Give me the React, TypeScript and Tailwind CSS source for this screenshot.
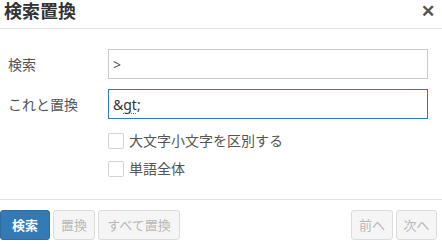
import React from 'react'

const FONT = "font-['Noto_Sans','Noto_Sans_CJK_JP',sans-serif]"

function Check({ label }: { label: string }) {
  return (
    <div className="flex items-center h-[16px] pl-[108px]">
      <span className="w-[16px] h-[16px] border border-[#d4d4d4] rounded-[2px] bg-white" />
      <span className="ml-[5px] text-[14px] leading-none text-[#555]">{label}</span>
    </div>
  )
}

function Btn({ children, w, primary }: { children: React.ReactNode; w: string; primary?: boolean }) {
  return primary ? (
    <button className={`${w} h-[30px] rounded-[3px] bg-[#337ab7] border border-[#2e6da4] text-white text-[13px] font-bold leading-none`}>
      {children}
    </button>
  ) : (
    <button className={`${w} h-[30px] rounded-[3px] bg-[#f5f5f5] border border-[#dcdcdc] text-[#b8b8b8] text-[13px] leading-none`}>
      {children}
    </button>
  )
}

export default function App() {
  return (
    <div className={`w-[442px] h-[244px] bg-white flex flex-col ${FONT}`}>
      {/* header */}
      <div className="h-[29px] border-b border-[#e2e2e2] flex items-start justify-between">
        <div className="pl-[4px] text-[18px] leading-[22px] font-bold text-[#333]">検索置換</div>
        <div className="pr-[7px] pt-[1px] text-[17px] leading-[20px] font-bold text-[#555]">✕</div>
      </div>

      {/* body */}
      <div className="flex-1 flex flex-col pt-[20px]">
        <div className="flex items-center">
          <div className="w-[108px] pl-[8px] text-[14px] text-[#555]">検索</div>
          <div className="w-[320px] h-[30px] border border-[#c8c8c8] flex items-center pl-[4px] text-[14px] text-[#555]">
            &gt;
          </div>
        </div>
        <div className="flex items-center mt-[10px]">
          <div className="w-[108px] pl-[8px] text-[14px] text-[#555]">これと置換</div>
          <div className="w-[320px] h-[30px] border border-[#2a78d4] flex items-center pl-[4px] text-[14px] text-[#333]">
            &amp;<span className="underline decoration-dotted decoration-[#e33] decoration-1 underline-offset-[3px]">gt</span>;
          </div>
        </div>
        <div className="mt-[14px]">
          <Check label="大文字小文字を区別する" />
        </div>
        <div className="mt-[12px]">
          <Check label="単語全体" />
        </div>
      </div>

      {/* footer */}
      <div className="h-[45px] border-t border-[#e2e2e2] pt-[10px] flex justify-between pr-[5px]">
        <div className="flex gap-[3px]">
          <Btn w="w-[50px]" primary>検索</Btn>
          <Btn w="w-[42px]">置換</Btn>
          <Btn w="w-[82px]">すべて置換</Btn>
        </div>
        <div className="flex gap-[3px]">
          <Btn w="w-[42px]">前へ</Btn>
          <Btn w="w-[41px]">次へ</Btn>
        </div>
      </div>
    </div>
  )
}
